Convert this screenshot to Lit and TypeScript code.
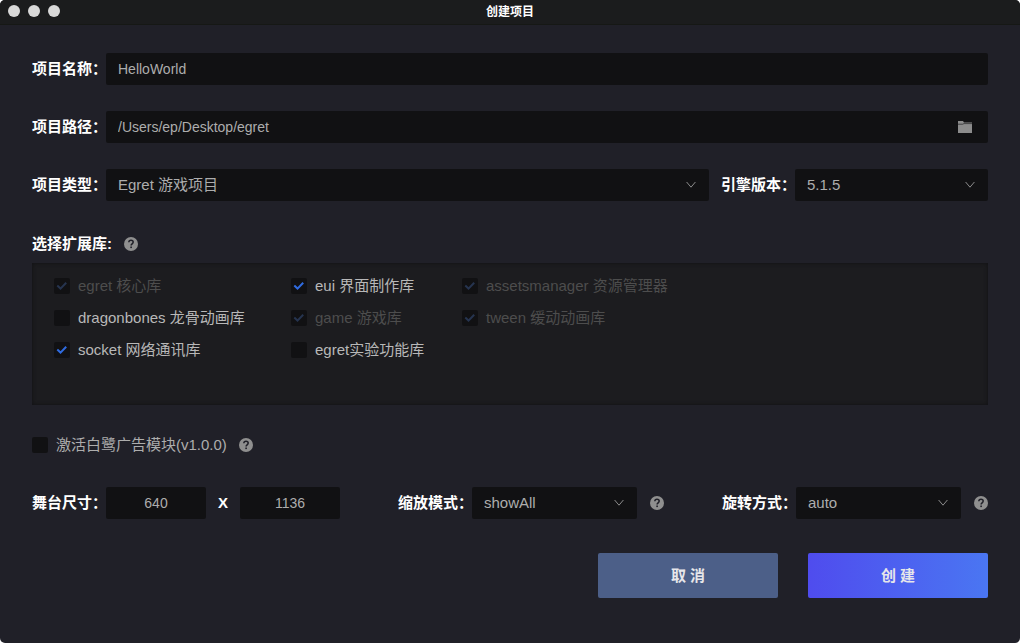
import { LitElement, html, css, svg } from "lit";
import { customElement, property, state } from "lit/decorators.js";

const helpIcon = svg`
  <circle cx="7" cy="7" r="7" fill="#8f8f8f"/>
  <path d="M4.8 5.3C4.9 3.9 5.8 3.2 7 3.2c1.300 0 2.200.8 2.200 1.900 0 1.700-2.100 1.700-2.100 3.400" fill="none" stroke="#202028" stroke-width="1.500"/>
  <rect x="6.300" y="9.500" width="1.600" height="1.600" fill="#202028"/>`;

@customElement("help-tip")
class HelpTip extends LitElement {
  static styles = css`
    :host { display: block; flex: none; width: 14px; height: 14px; }
    .icon { display: block; }
  `;
  render() {
    return html`<svg class="icon" width="14" height="14" viewBox="0 0 14 14" role="img" aria-label="帮助">${helpIcon}</svg>`;
  }
}

@customElement("select-box")
class SelectBox extends LitElement {
  @property() label = "";
  @property({ attribute: false }) options: string[] = [];

  static styles = css`
    :host { display: block; min-width: 0; }
    .field { display: flex; align-items: center; }
    .label {
      flex: none;
      width: 74px;
      white-space: nowrap;
      font-weight: 700;
      color: #fff;
    }
    .box { position: relative; flex: 1; min-width: 0; }
    .select {
      appearance: none;
      display: block;
      box-sizing: border-box;
      width: 100%;
      height: 32px;
      margin: 0;
      padding: 0 32px 0 12px;
      border: 0;
      border-radius: 2px;
      background: #111113;
      color: #adadad;
      font: inherit;
    }
    .chevron { position: absolute; right: 13px; top: 12px; pointer-events: none; }
  `;
  render() {
    return html`
      <div class="field">
        <label class="label" for="select">${this.label}</label>
        <div class="box">
          <select class="select" id="select">
            ${this.options.map((o) => html`<option>${o}</option>`)}
          </select>
          <svg class="chevron" width="10" height="8" viewBox="0 0 10 8">
            <path d="M.6 1 5 6.2 9.4 1" fill="none" stroke="#8c8c8c" stroke-width="1"/>
          </svg>
        </div>
      </div>`;
  }
}

@customElement("check-item")
class CheckItem extends LitElement {
  @property() label = "";
  @property({ type: Boolean }) checked = false;
  @property({ type: Boolean }) disabled = false;

  static styles = css`
    :host { display: block; }
    :host([disabled]) { color: #4d4d4d; }
    .item { display: flex; align-items: center; gap: 8px; white-space: nowrap; line-height: 22px; }
    .mark { display: grid; flex: none; width: 16px; height: 16px; }
    .box {
      grid-area: 1 / 1;
      appearance: none;
      width: 16px;
      height: 16px;
      margin: 0;
      border-radius: 2px;
      background: #111113;
    }
    .tick { grid-area: 1 / 1; visibility: hidden; pointer-events: none; color: #2f6be0; }
    .box:checked + .tick { visibility: visible; }
    .box:disabled + .tick { color: #26344f; }
  `;
  render() {
    return html`
      <label class="item">
        <span class="mark">
          <input class="box" type="checkbox" .checked=${this.checked} ?disabled=${this.disabled}>
          <svg class="tick" width="16" height="16" viewBox="0 0 16 16">
            <path d="M3.300 7.600 6.500 10.600 12.200 4.700" fill="none" stroke="currentColor" stroke-width="2"/>
          </svg>
        </span>
        <span>${this.label}</span>
      </label>`;
  }
}

@customElement("app-root")
class AppRoot extends LitElement {
  @state() private libraries = [
    { name: "egret 核心库", checked: true, disabled: true },
    { name: "eui 界面制作库", checked: true, disabled: false },
    { name: "assetsmanager 资源管理器", checked: true, disabled: true },
    { name: "dragonbones 龙骨动画库", checked: false, disabled: false },
    { name: "game 游戏库", checked: true, disabled: true },
    { name: "tween 缓动动画库", checked: true, disabled: true },
    { name: "socket 网络通讯库", checked: true, disabled: false },
    { name: "egret实验功能库", checked: false, disabled: false },
  ];

  static styles = css`
    :host {
      display: block;
      background: #fff;
      font: 15px/22px "Liberation Sans", "Noto Sans CJK SC", sans-serif;
      color: #adadad;
    }
    .window {
      display: flex;
      flex-direction: column;
      box-sizing: border-box;
      min-height: 100vh;
      border-radius: 5px;
      overflow: hidden;
      background: #202028;
    }
    .titlebar {
      display: grid;
      grid-template-columns: 1fr auto 1fr;
      box-sizing: border-box;
      height: 25px;
      padding: 0 8px;
      border-bottom: 1px solid #161815;
      background: #1b1c1d;
    }
    .lights { display: flex; gap: 8px; padding-top: 5px; }
    .light { width: 12px; height: 12px; border-radius: 50%; background: #d8d8d8; }
    .title { margin: 0; font-size: 12px; line-height: 24px; font-weight: 700; color: #fff; }
    .form { display: flex; flex-direction: column; padding: 28px 32px 45px; }
    .rows { display: flex; flex-direction: column; gap: 26px; }
    .row { display: flex; align-items: center; }
    .label { flex: none; width: 74px; white-space: nowrap; font-weight: 700; color: #fff; }
    .control { position: relative; flex: 1; min-width: 0; }
    .input {
      display: block;
      box-sizing: border-box;
      width: 100%;
      height: 32px;
      margin: 0;
      padding: 0 12px;
      border: 0;
      border-radius: 2px;
      background: #111113;
      color: #adadad;
      font: inherit;
      font-size: 14px;
    }
    .size { width: 100px; text-align: center; }
    .browse {
      position: absolute;
      top: 4px;
      right: 11px;
      display: grid;
      place-items: center;
      width: 24px;
      height: 24px;
      padding: 0;
      border: 0;
      background: none;
    }
    .type { flex: 1; }
    .split { display: flex; gap: 12px; }
    .version { width: 267px; }
    .heading { display: flex; align-items: center; gap: 12px; margin-top: 32px; }
    .caption { margin: 0; font-size: 15px; line-height: 22px; font-weight: 700; color: #fff; }
    .panel {
      display: grid;
      grid-template-columns: 237px 171px auto;
      justify-content: start;
      align-content: start;
      gap: 10px 0;
      box-sizing: border-box;
      min-height: 142px;
      margin-top: 8px;
      padding: 12px 22px;
      background: #1c1c1f;
      box-shadow: inset 0 0 4px #111113;
      color: #b8b8b8;
    }
    .ads { display: flex; align-items: center; gap: 12px; margin-top: 29px; }
    .stage { display: flex; align-items: center; justify-content: space-between; margin-top: 31px; }
    .group { display: flex; align-items: center; gap: 13px; }
    .times { width: 34px; text-align: center; font-weight: 700; color: #fff; }
    .mode { width: 239px; }
    .actions { display: flex; justify-content: flex-end; gap: 30px; margin-top: 34px; }
    .button {
      width: 180px;
      height: 45px;
      padding: 0;
      border: 0;
      border-radius: 2px;
      background: #4c5f88;
      color: #e6e6ea;
      font: inherit;
      font-weight: 700;
    }
    .primary { background: linear-gradient(90deg, #4f4cee, #4a76f2); }
  `;

  render() {
    return html`
      <main class="window">
        <header class="titlebar">
          <div class="lights"><span class="light"></span><span class="light"></span><span class="light"></span></div>
          <h1 class="title">创建项目</h1>
        </header>
        <form class="form" @submit=${(e: Event) => e.preventDefault()}>
          <div class="rows">
            <div class="row">
              <label class="label" for="name">项目名称：</label>
              <div class="control"><input class="input" id="name" type="text" value="HelloWorld"></div>
            </div>
            <div class="row">
              <label class="label" for="path">项目路径：</label>
              <div class="control">
                <input class="input" id="path" type="text" value="/Users/ep/Desktop/egret">
                <button class="browse" type="button" aria-label="浏览">
                  <svg width="14" height="12" viewBox="0 0 14 12" fill="#8c8c8c">
                    <path d="M0 0h5l1 1.5h8V12H0z"/>
                    <path d="M0 3.2h4.600L6 2.600h8" stroke="#111113" stroke-width=".6" fill="none"/>
                  </svg>
                </button>
              </div>
            </div>
            <div class="split">
              <select-box class="type" label="项目类型：" .options=${["Egret 游戏项目"]}></select-box>
              <select-box class="version" label="引擎版本：" .options=${["5.1.5"]}></select-box>
            </div>
          </div>
          <div class="heading">
            <h2 class="caption">选择扩展库:</h2>
            <help-tip></help-tip>
          </div>
          <div class="panel">
            ${this.libraries.map((l) => html`
              <check-item label=${l.name} ?checked=${l.checked} ?disabled=${l.disabled}></check-item>`)}
          </div>
          <div class="ads">
            <check-item label="激活白鹭广告模块(v1.0.0)"></check-item>
            <help-tip></help-tip>
          </div>
          <div class="stage">
            <div class="row">
              <label class="label" for="width">舞台尺寸：</label>
              <input class="input size" id="width" type="text" value="640">
              <span class="times">X</span>
              <input class="input size" type="text" aria-label="高度" value="1136">
            </div>
            <div class="group">
              <select-box class="mode" label="缩放模式：" .options=${["showAll"]}></select-box>
              <help-tip></help-tip>
            </div>
            <div class="group">
              <select-box class="mode" label="旋转方式：" .options=${["auto"]}></select-box>
              <help-tip></help-tip>
            </div>
          </div>
          <div class="actions">
            <button class="button" type="button">取 消</button>
            <button class="button primary" type="submit">创 建</button>
          </div>
        </form>
      </main>`;
  }
}
